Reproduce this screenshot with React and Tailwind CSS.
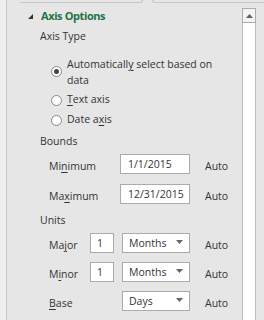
import React from "react";

const font = { fontFamily: '"Open Sans", "Noto Sans", sans-serif' };

function U({ children }) {
  return <span className="underline underline-offset-2 decoration-[#333]">{children}</span>;
}

function Radio({ checked }) {
  return (
    <div className="w-[11px] h-[11px] rounded-full border border-[#888] bg-white flex items-center justify-center shrink-0">
      {checked && <div className="w-[5px] h-[5px] rounded-full bg-[#444]" />}
    </div>
  );
}

function Arrow() {
  return (
    <svg width="7" height="4" viewBox="0 0 7 4" className="shrink-0">
      <path d="M0 0 H7 L3.5 4 Z" fill="#666" />
    </svg>
  );
}

function Label({ children, w }) {
  return <div className={`pt-[4px] leading-[16px] ${w}`}>{children}</div>;
}

export default function App() {
  return (
    <div
      className="w-[264px] h-[320px] overflow-hidden bg-[#e6e6e6] flex text-[10.5px] text-[#333]"
      style={font}
    >
      <div className="w-[6px] bg-[#efefef]" />
      <div className="w-px bg-[#c9c9c9]" />
      <div className="flex-1 flex flex-col">
        {/* top tab bottoms */}
        <div className="h-[3px] flex">
          <div className="w-[13px]" />
          <div className="w-[123px] h-[3px] border-b border-r border-[#c6c6c6] rounded-br-[4px]" />
          <div className="w-[9px]" />
          <div className="flex-1 h-[3px] border-b border-l border-[#c6c6c6] rounded-bl-[4px]" />
        </div>
        <div className="flex flex-1">
          {/* content */}
          <div className="w-[235px] flex flex-col">
            <div className="h-[26px] flex items-center">
              <svg width="5" height="5" viewBox="0 0 5 5" className="ml-[21px] mt-[1px]">
                <path d="M5 0 V5 H0 Z" fill="#333" />
              </svg>
              <span className="ml-[8px] text-[11px] font-bold text-[#217346] tracking-[-0.4px]">
                Axis Options
              </span>
            </div>
            <div className="h-[16px] flex items-center pl-[33px]">Axis Type</div>
            <div className="mt-[11px] flex pl-[44px]">
              <div className="mt-[10px]">
                <Radio checked />
              </div>
              <div className="ml-[5px] leading-[16px]">
                Automaticall<U>y</U> select based on
                <br />
                data
              </div>
            </div>
            <div className="mt-[2px] h-[20px] flex items-center pl-[44px]">
              <Radio />
              <span className="ml-[5px]">
                <U>T</U>ext axis
              </span>
            </div>
            <div className="h-[20px] flex items-center pl-[44px]">
              <Radio />
              <span className="ml-[5px]">
                Date a<U>x</U>is
              </span>
            </div>
            <div className="mt-[4px] h-[16px] flex items-center pl-[33px]">Bounds</div>

            <div className="mt-[4px] h-[20px] flex pl-[42px]">
              <Label w="w-[71px]">
                Mi<U>n</U>imum
              </Label>
              <div className="w-[70px] h-[20px] border border-[#ababab] bg-white pl-[7px] pt-[1px] leading-[16px]">
                1/1/2015
              </div>
              <Label w="ml-[15px]">Auto</Label>
            </div>
            <div className="mt-[10px] h-[20px] flex pl-[42px]">
              <Label w="w-[71px]">
                Ma<U>x</U>imum
              </Label>
              <div className="w-[70px] h-[20px] border border-[#ababab] bg-white pl-[7px] pt-[1px] leading-[16px]">
                12/31/2015
              </div>
              <Label w="ml-[15px]">Auto</Label>
            </div>

            <div className="mt-[9px] h-[16px] flex items-center pl-[33px]">Units</div>

            <div className="mt-[4px] h-[20px] flex pl-[42px]">
              <Label w="w-[41px]">
                Ma<U>j</U>or
              </Label>
              <div className="w-[24px] h-[20px] border border-[#ababab] bg-white pl-[6px] pt-[1px] leading-[16px]">
                1
              </div>
              <div className="ml-[8px] w-[68px] h-[20px] border border-[#ababab] bg-white pl-[6px] pr-[6px] pt-[1px] leading-[16px] flex items-start justify-between">
                <span>Months</span>
                <div className="mt-[5px]">
                  <Arrow />
                </div>
              </div>
              <Label w="ml-[15px]">Auto</Label>
            </div>
            <div className="mt-[9px] h-[20px] flex pl-[42px]">
              <Label w="w-[41px]">
                M<U>i</U>nor
              </Label>
              <div className="w-[24px] h-[20px] border border-[#ababab] bg-white pl-[6px] pt-[1px] leading-[16px]">
                1
              </div>
              <div className="ml-[8px] w-[68px] h-[20px] border border-[#ababab] bg-white pl-[6px] pr-[6px] pt-[1px] leading-[16px] flex items-start justify-between">
                <span>Months</span>
                <div className="mt-[5px]">
                  <Arrow />
                </div>
              </div>
              <Label w="ml-[15px]">Auto</Label>
            </div>
            <div className="mt-[9px] h-[20px] flex pl-[42px]">
              <Label w="w-[73px]">
                <U>B</U>ase
              </Label>
              <div className="w-[68px] h-[20px] border border-[#ababab] bg-white pl-[6px] pr-[6px] pt-[1px] leading-[16px] flex items-start justify-between">
                <span>Days</span>
                <div className="mt-[5px]">
                  <Arrow />
                </div>
              </div>
              <Label w="ml-[15px]">Auto</Label>
            </div>
          </div>
          {/* scrollbar */}
          <div className="w-[14px] flex flex-col mt-[5px]">
            <div className="h-[15px] border border-[#ababab] bg-[#f3f3f3] flex items-center justify-center">
              <svg width="7" height="4" viewBox="0 0 7 4">
                <path d="M0 4 H7 L3.5 0 Z" fill="#606060" />
              </svg>
            </div>
            <div className="flex-1 border-x border-[#bcbcbc] bg-white" />
          </div>
          <div className="flex-1" />
        </div>
      </div>
    </div>
  );
}
